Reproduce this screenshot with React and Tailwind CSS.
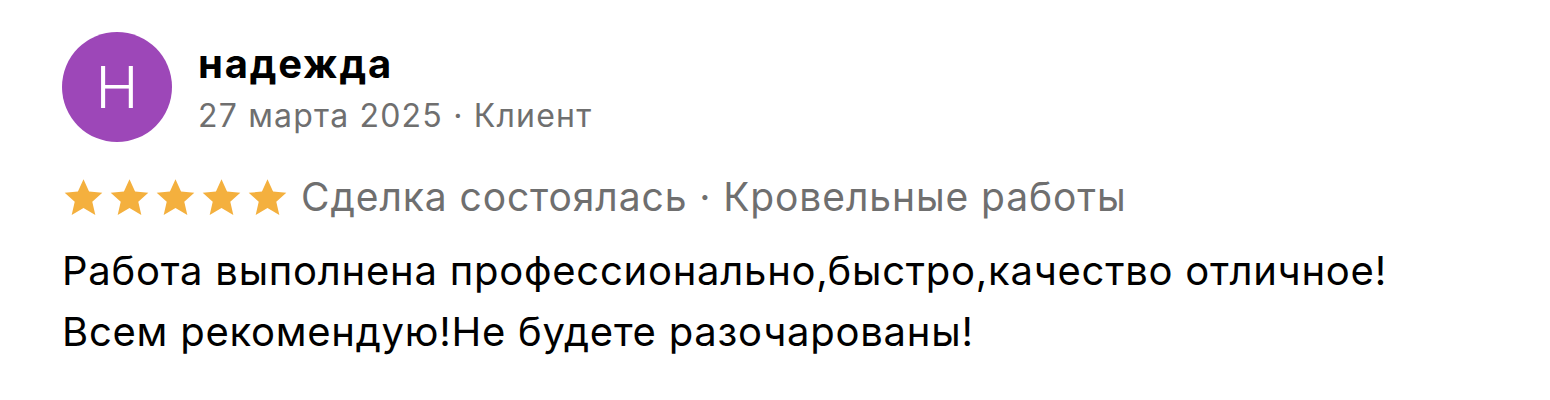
const stars = [0, 1, 2, 3, 4];

function Star() {
  return (
    <svg viewBox="0 0 24 24" className="w-[43px] h-[43px]" fill="#F4B03E">
      <path d="M12 1.8l3.1 6.9 7.4.7-5.6 5 1.7 7.4L12 17.9l-6.6 3.9 1.7-7.4-5.6-5 7.4-.7z" />
    </svg>
  );
}

export default function App() {
  const font = { fontFamily: 'Inter, "Noto Sans", sans-serif' };
  return (
    <div className="w-[1550px] h-[400px] bg-white pl-[62px] pt-[32px]" style={font}>
      <div className="flex items-start gap-[26px]">
        <div className="w-[110px] h-[110px] rounded-full bg-[#9D47B8] flex items-center justify-center text-white text-[58px] font-light leading-none">
          Н
        </div>
        <div className="flex flex-col pt-[8px]">
          <div className="text-[40px] font-bold text-black leading-[48px] tracking-[1.8px]">надежда</div>
          <div className="mt-[8px] text-[32px] text-[#6f6f6f] leading-[40px] tracking-[1.2px]">27 марта 2025 · Клиент</div>
        </div>
      </div>
      <div className="flex items-center mt-[33px] gap-[12px] h-[44px]">
        <div className="flex gap-[3px]">
          {stars.map((i) => (
            <Star key={i} />
          ))}
        </div>
        <div className="text-[39px] text-[#6f6f6f] leading-[44px] tracking-[0.9px]">Сделка состоялась · Кровельные работы</div>
      </div>
      <div className="mt-[21px] text-[40px] text-black leading-[61px] tracking-[0.75px]">
        <div>Работа выполнена профессионально,быстро,качество отличное!</div>
        <div>Всем рекомендую!Не будете разочарованы!</div>
      </div>
    </div>
  );
}
